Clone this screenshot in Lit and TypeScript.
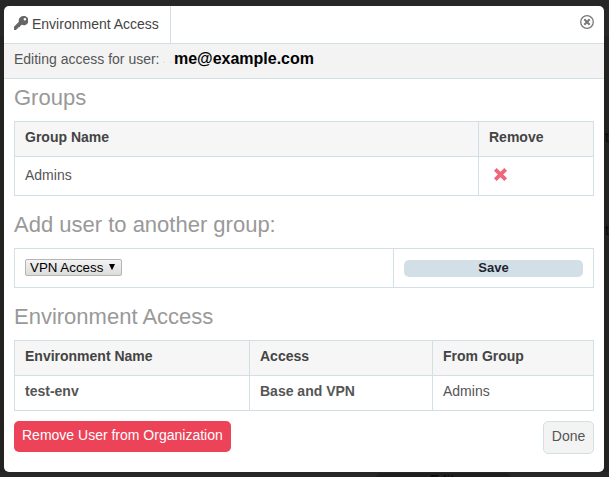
import { LitElement, html, css } from "lit";
import { customElement } from "lit/decorators.js";

@customElement("app-root")
export class AppRoot extends LitElement {
  static styles = css`
    :host {
      display: block;
      position: relative;
      box-sizing: border-box;
      width: 609px;
      height: 477px;
      padding: 6px 5px 5px 4px;
      overflow: hidden;
      background: linear-gradient(#272727 0 36px, #222321 36px 472px, #272727 472px);
      font-family: "Liberation Sans", Arial, sans-serif;
      font-size: 14px;
      line-height: 20px;
      color: #555;
    }
    * { box-sizing: border-box; }
    .behind { position: absolute; color: #080808; font-weight: bold; font-size: 13px; line-height: 16px; }
    .edit { left: 430px; top: 472px; }
    .edit-pill { position: absolute; left: 376px; top: 473px; width: 135px; height: 10px; border-radius: 6px; background: #1d1f21; }
    .letter { left: 605px; top: 129px; font-weight: normal; font-size: 14px; }
    .letter2 { left: 605px; top: 222px; font-weight: normal; font-size: 14px; }
    .modal { position: relative; height: 466px; background: #fff; border-radius: 5px; overflow: hidden; }
    .head { display: flex; justify-content: space-between; height: 38px; border-bottom: 1px solid #d2e0e6; }
    .tab { display: flex; width: 167px; padding: 8px 0 0 10px; border-right: 1px solid #d2e0e6; color: #444; white-space: nowrap; }
    .key { width: 14px; height: 14px; margin: 2px 4px 0 0; }
    .close { width: 14px; height: 14px; margin: 9px 10px 0 0; }
    .sub { display: flex; height: 35px; padding: 5px 10px 0; background: #f3f3f3; border-bottom: 1px solid #d2e0e6; white-space: pre; }
    .dots { width: 14.4px; padding-left: 3px; color: #ddd; font-size: 12px; }
    .mail { color: #000; font-weight: bold; font-size: 16px; }
    .body { padding: 0 10px; }
    h2 { margin: 0; font-size: 22px; font-weight: normal; line-height: 30px; color: #999; }
    .h-groups { height: 42px; padding-top: 4px; }
    .h-add { height: 52px; padding-top: 14px; }
    .h-env { height: 52px; padding-top: 14px; }
    .table { border: 1px solid #d2e0e6; }
    .row { display: grid; }
    .row + .row { border-top: 1px solid #d2e0e6; }
    .row > div { padding: 5px 10px; white-space: nowrap; }
    .row > div + div { border-left: 1px solid #d2e0e6; }
    .th { height: 34px; background: #f6f6f6; font-weight: bold; color: #444; }
    .g2 { grid-template-columns: 463px 1fr; }
    .g2b { grid-template-columns: 378px 1fr; height: 38px; }
    .g3 { grid-template-columns: 234px 183px 1fr; }
    .tall { height: 39px; }
    .tall > div { padding-top: 8px; }
    .mid { height: 35px; }
    .x { display: block; width: 15px; height: 15px; margin: 2px 0 0 4px; }
    .strong { font-weight: bold; }
    .row > .sel-cell { padding-top: 10px; }
    .select { display: flex; justify-content: space-between; width: 97px; height: 17px; padding: 0 6px 0 4px; border: 1px solid #b5b5b5; border-radius: 2px; background: linear-gradient(#f3f3f3, #dcdcdc); color: #000; font-size: 13.33px; line-height: 16px; }
    .arrow { width: 6px; height: 7px; margin-top: 4px; }
    .row > .save-cell { padding-top: 11px; }
    .save { height: 17px; border-radius: 5px; background: #d3dfe7; color: #1f2430; font-weight: bold; font-size: 13px; line-height: 16px; text-align: center; }
    .foot { display: flex; justify-content: space-between; padding-top: 10px; }
    .danger { width: 217px; height: 31px; padding: 4px 0 0 8px; border-radius: 5px; background: #ec4358; color: #fff; white-space: nowrap; }
    .done { width: 51px; height: 33px; padding: 4px 0 0; border: 1px solid #d2e0e6; border-radius: 5px; background: #f3f3f3; text-align: center; }
  `;

  render() {
    return html`
      <div class="edit-pill"></div>
      <span class="behind edit">Edit</span>
      <span class="behind letter">t</span>
      <span class="behind letter2">t</span>
      <div class="modal">
        <div class="head">
          <div class="tab">
            <svg class="key" viewBox="0 0 14 14">
              <path fill="#666" fill-rule="evenodd" d="M9.4 0A4.6 4.6 0 0 0 4.9 5.8L0 10.8V14H2.2L3 12.6H4.2V11.2H5.6L6.2 9.9L7.9 8.7A4.6 4.6 0 1 0 9.4 0ZM10.9 1.9A1.3 1.3 0 1 1 10.9 4.5A1.3 1.3 0 0 1 10.9 1.9Z"/>
            </svg>
            <span>Environment Access</span>
          </div>
          <svg class="close" viewBox="0 0 14 14" fill="none" stroke="#777">
            <circle cx="7" cy="7" r="6.3" stroke-width="1.3"/>
            <path d="M4.3 4.3L9.7 9.7M9.7 4.3L4.3 9.7" stroke-width="2.1"/>
          </svg>
        </div>
        <div class="sub"><span>Editing access for user:</span><span class="dots">. .</span><span class="mail">me@example.com</span></div>
        <div class="body">
          <h2 class="h-groups">Groups</h2>
          <div class="table">
            <div class="row g2 th"><div>Group Name</div><div>Remove</div></div>
            <div class="row g2 tall">
              <div>Admins</div>
              <div>
                <svg class="x" viewBox="0 0 15 15"><path d="M2.3 2.3L12.7 12.7M12.7 2.3L2.3 12.7" stroke="#f0667a" stroke-width="3.8"/></svg>
              </div>
            </div>
          </div>
          <h2 class="h-add">Add user to another group:</h2>
          <div class="table">
            <div class="row g2b">
              <div class="sel-cell">
                <div class="select"><span>VPN Access</span><svg class="arrow" viewBox="0 0 6 7"><path d="M0 0H6L3 6.2Z" fill="#000"/></svg></div>
              </div>
              <div class="save-cell"><div class="save">Save</div></div>
            </div>
          </div>
          <h2 class="h-env">Environment Access</h2>
          <div class="table">
            <div class="row g3 th"><div>Environment Name</div><div>Access</div><div>From Group</div></div>
            <div class="row g3 mid"><div class="strong">test-env</div><div class="strong">Base and VPN</div><div>Admins</div></div>
          </div>
          <div class="foot">
            <div class="danger">Remove User from Organization</div>
            <div class="done">Done</div>
          </div>
        </div>
      </div>
    `;
  }
}
